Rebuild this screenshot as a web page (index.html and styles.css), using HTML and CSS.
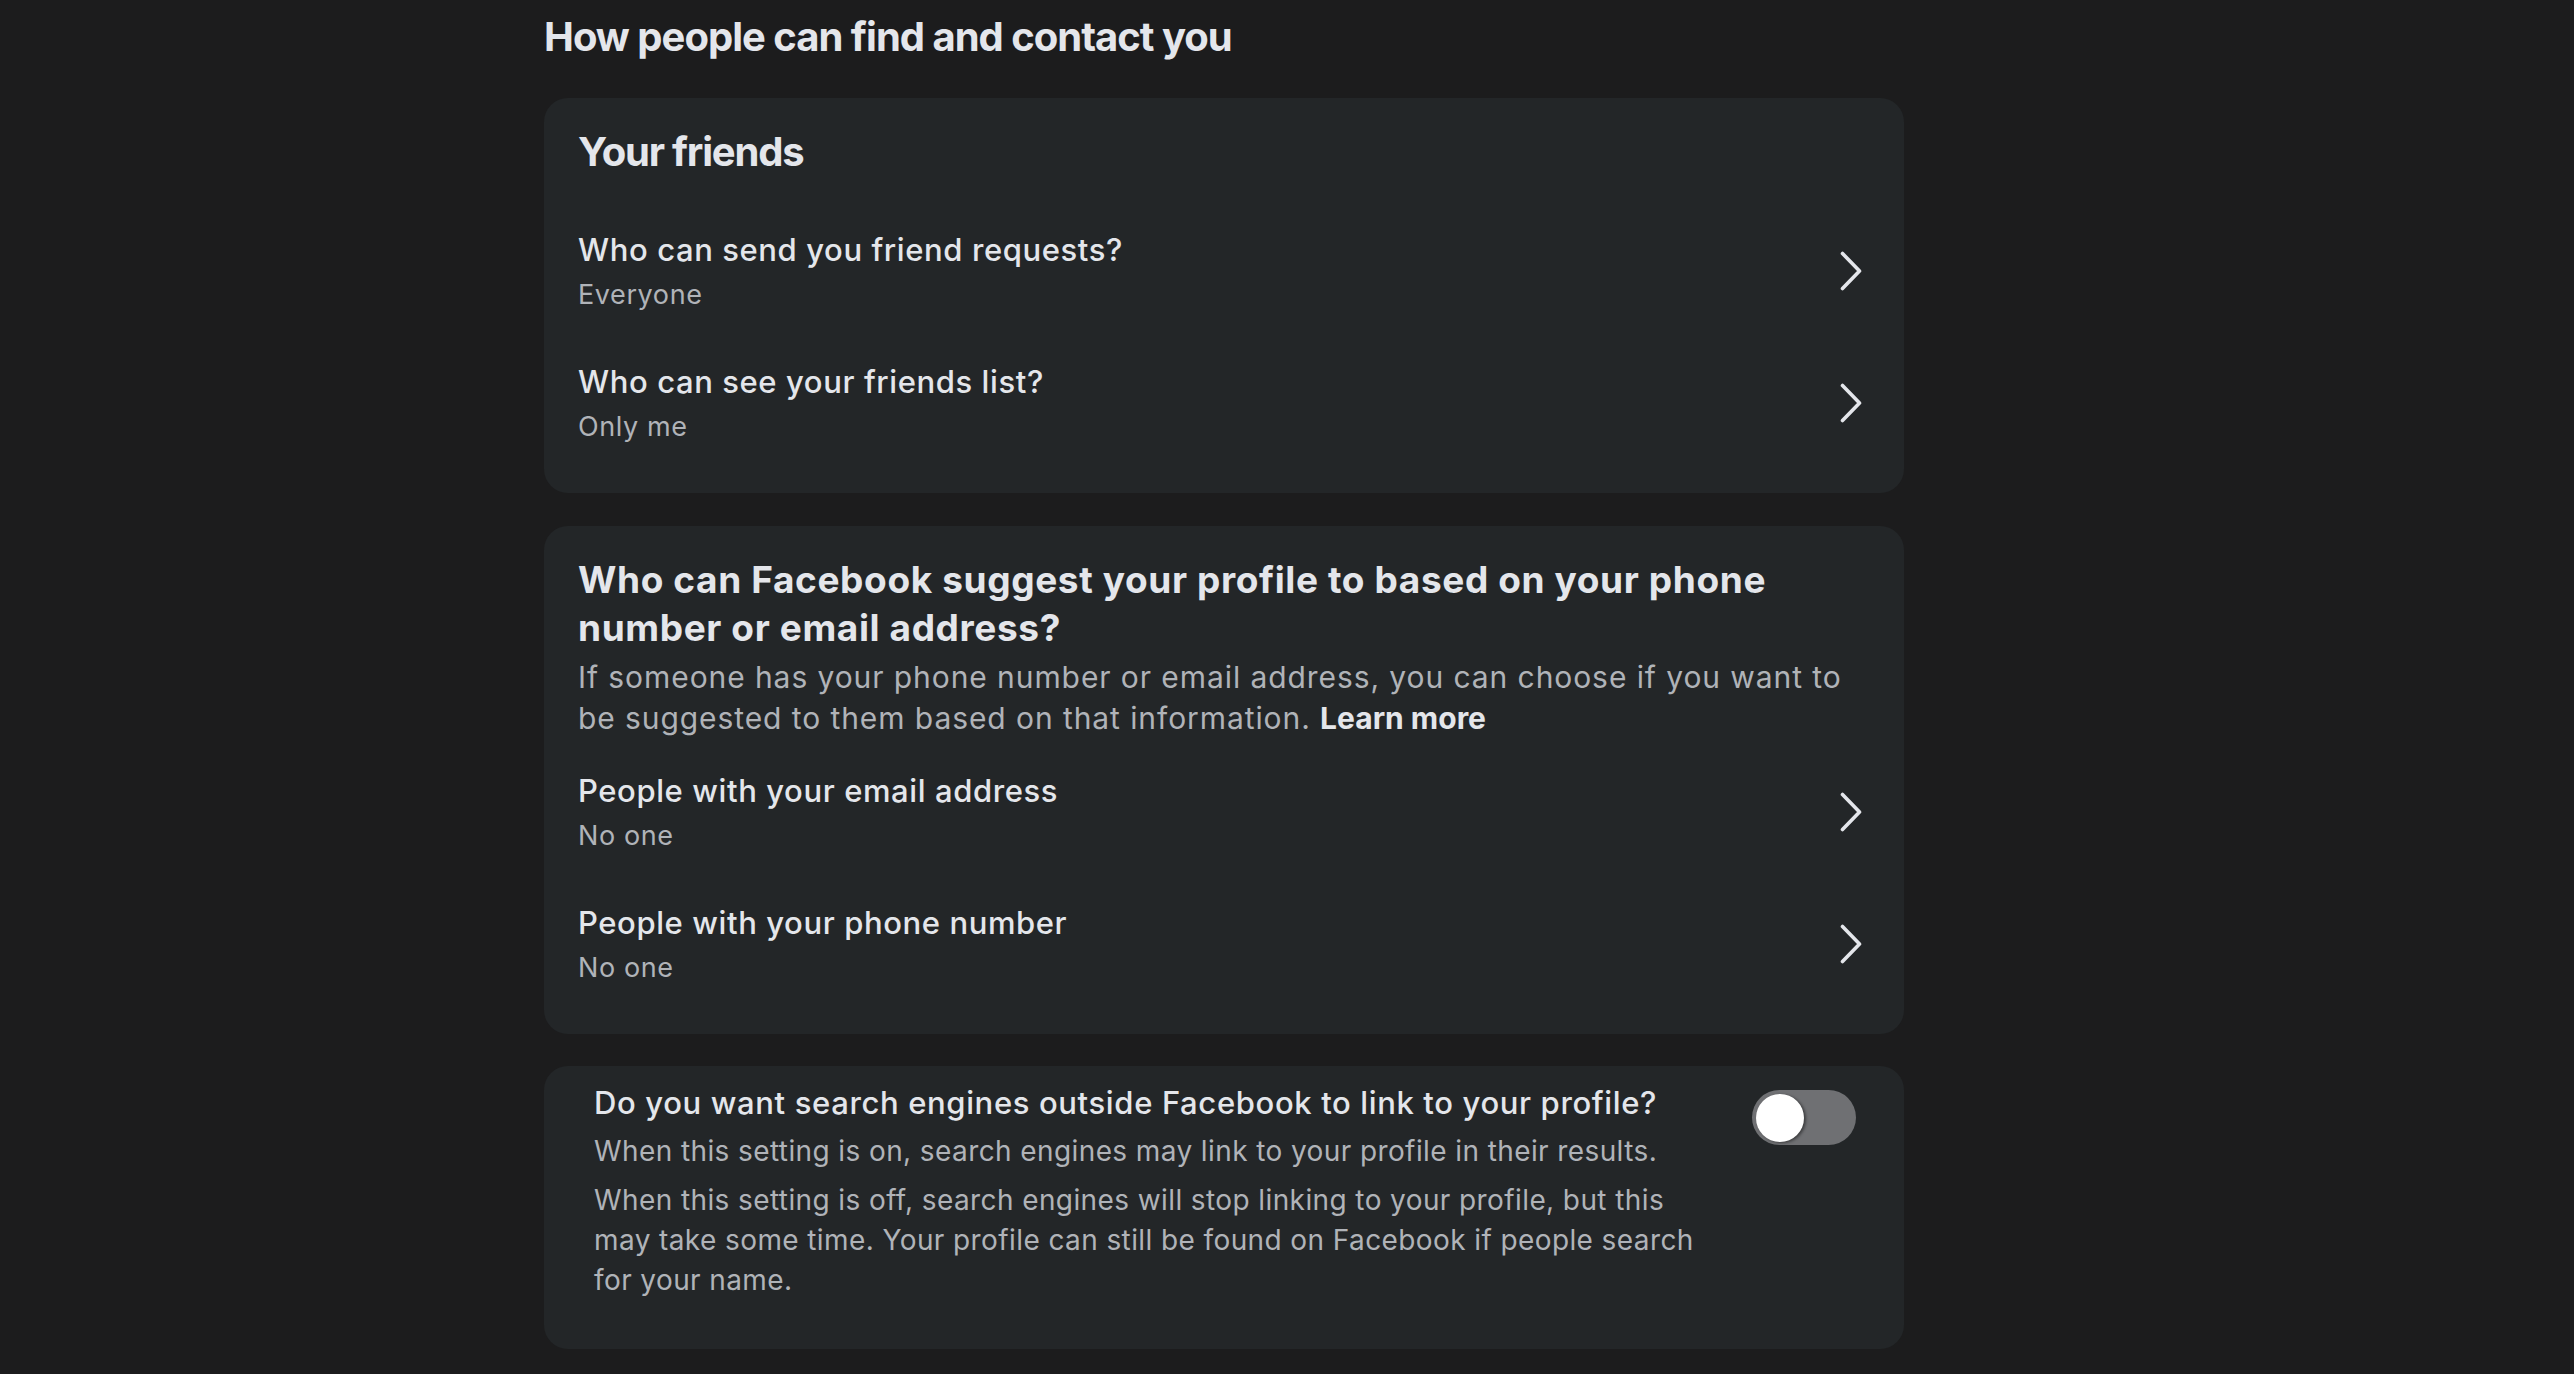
FILE: index.html
```html
<!DOCTYPE html>
<html lang="en">
<head>
<meta charset="utf-8">
<title>How people can find and contact you</title>
<link rel="stylesheet" href="styles.css">
</head>
<body>
<main class="page">
  <h1 class="page-title">How people can find and contact you</h1>

  <section class="card">
    <h2 class="card-heading">Your friends</h2>
    <div class="row">
      <div class="row-text">
        <div class="row-title">Who can send you friend requests?</div>
        <div class="row-sub">Everyone</div>
      </div>
      <svg class="chev" viewBox="0 0 22 40" aria-hidden="true"><path d="M2.5 2.5 L19.5 20 L2.5 37.5"/></svg>
    </div>
    <div class="row">
      <div class="row-text">
        <div class="row-title">Who can see your friends list?</div>
        <div class="row-sub">Only me</div>
      </div>
      <svg class="chev" viewBox="0 0 22 40" aria-hidden="true"><path d="M2.5 2.5 L19.5 20 L2.5 37.5"/></svg>
    </div>
  </section>

  <section class="card">
    <h2 class="card-heading card-heading--long">Who can Facebook suggest your profile to based on your phone number or email address?</h2>
    <p class="card-desc">If someone has your phone number or email address, you can choose if you want to be suggested to them based on that information. <a class="learn" href="#">Learn more</a></p>
    <div class="row">
      <div class="row-text">
        <div class="row-title">People with your email address</div>
        <div class="row-sub">No one</div>
      </div>
      <svg class="chev" viewBox="0 0 22 40" aria-hidden="true"><path d="M2.5 2.5 L19.5 20 L2.5 37.5"/></svg>
    </div>
    <div class="row">
      <div class="row-text">
        <div class="row-title">People with your phone number</div>
        <div class="row-sub">No one</div>
      </div>
      <svg class="chev" viewBox="0 0 22 40" aria-hidden="true"><path d="M2.5 2.5 L19.5 20 L2.5 37.5"/></svg>
    </div>
  </section>

  <section class="card card--toggle">
    <div class="toggle-text">
      <div class="toggle-title">Do you want search engines outside Facebook to link to your profile?</div>
      <p class="toggle-desc">When this setting is on, search engines may link to your profile in their results.</p>
      <p class="toggle-desc">When this setting is off, search engines will stop linking to your profile, but this may take some time. Your profile can still be found on Facebook if people search for your name.</p>
    </div>
    <div class="switch" role="switch" aria-checked="false"><span class="knob"></span></div>
  </section>
</main>
</body>
</html>
```

FILE: styles.css
```css
html, body {
  margin: 0;
  padding: 0;
  background: #1c1c1d;
}
body {
  font-family: Inter, "Noto Sans", sans-serif;
  color: #e4e6eb;
}
.page {
  margin-left: 544px;
  width: 1360px;
  padding-top: 13px;
}
.page-title {
  margin: 0 0 37px 0;
  font-size: 40px;
  line-height: 48px;
  font-weight: 700;
  letter-spacing: -1px;
}
.card {
  background: #232628;
  border-radius: 24px;
  padding: 30px 42px 24px 34px;
  margin-bottom: 33px;
}
.card-heading {
  margin: 0 0 29px 0;
  font-size: 40px;
  line-height: 48px;
  font-weight: 700;
  letter-spacing: -1.2px;
}
.card-heading--long {
  font-size: 37px;
  line-height: 48px;
  letter-spacing: 0.62px;
  margin: 0 0 5px 0;
}
.card-desc {
  margin: 0 0 7px 0;
  font-size: 30px;
  line-height: 41px;
  letter-spacing: 0.92px;
  color: #b0b3b8;
}
.learn {
  color: #e4e6eb;
  font-weight: 700;
  letter-spacing: 0;
  text-decoration: none;
}
.row {
  display: flex;
  align-items: center;
  padding: 25px 0;
}
.row-text {
  flex: 1;
  display: flex;
  flex-direction: column;
  gap: 8px;
}
.row-title {
  font-size: 31px;
  line-height: 40px;
  font-weight: 500;
  letter-spacing: 0.6px;
}
.row-sub {
  font-size: 27px;
  line-height: 34px;
  letter-spacing: 0.6px;
  color: #b0b3b8;
}
.chev {
  width: 22px;
  height: 40px;
  flex: none;
}
.chev path {
  fill: none;
  stroke: #e4e6eb;
  stroke-width: 3.6;
  stroke-linecap: round;
  stroke-linejoin: round;
}
.card--toggle {
  display: flex;
  align-items: flex-start;
  margin-top: -1px;
  padding: 17px 48px 49px 50px;
}
.toggle-text {
  flex: 1;
  margin-right: 30px;
}
.toggle-title {
  font-size: 31px;
  line-height: 40px;
  font-weight: 500;
  letter-spacing: 0.64px;
  margin-bottom: 8px;
}
.toggle-desc {
  margin: 0 0 9px 0;
  font-size: 28px;
  line-height: 40px;
  letter-spacing: 0.4px;
  color: #b0b3b8;
}
.toggle-desc:last-child {
  margin-bottom: 0;
}
.switch {
  flex: none;
  width: 104px;
  height: 55px;
  margin-top: 7px;
  border-radius: 28px;
  background: #6f7073;
  display: flex;
  align-items: center;
  padding-left: 4px;
  box-sizing: border-box;
}
.knob {
  width: 48px;
  height: 48px;
  border-radius: 50%;
  background: #ffffff;
  box-shadow: 2px 1px 3px rgba(0, 0, 0, 0.45);
}
```
